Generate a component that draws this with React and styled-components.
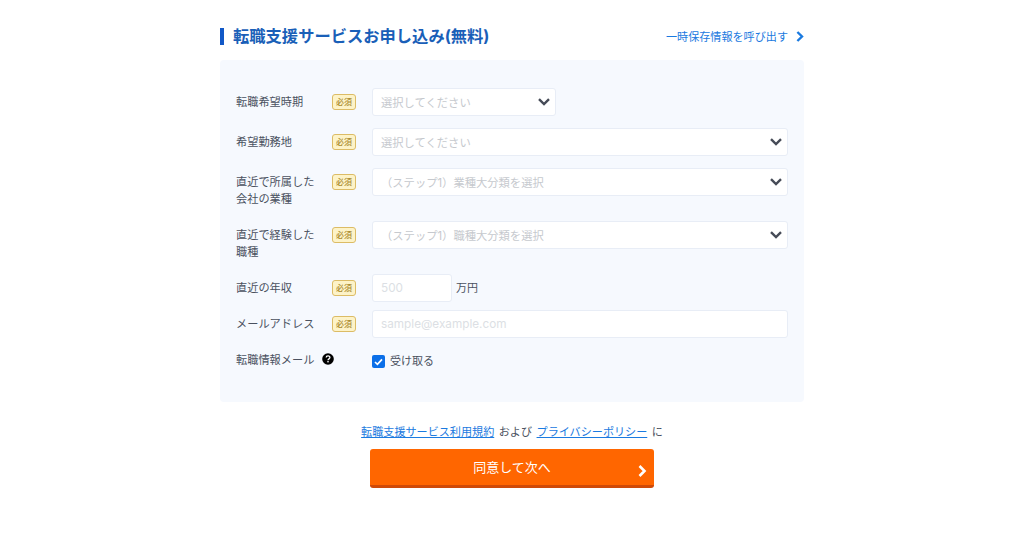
import React from 'react';
import styled, { createGlobalStyle } from 'styled-components';

const Global = createGlobalStyle`
  html, body { margin: 0; background: #fff; }
  body { font-family: "Inter", "Noto Sans CJK JP", sans-serif; color: #4a5160; }
`;

const Page = styled.main`
  width: 584px;
  margin: 0 auto;
  padding-top: 24px;
  height: 550px;
  box-sizing: border-box;
`;

const Header = styled.header`
  display: flex;
  justify-content: space-between;
  align-items: center;
  height: 24px;
  margin-bottom: 12px;
`;

const Title = styled.h1`
  margin: 0;
  font-size: 16.3px;
  line-height: 24px;
  font-weight: 700;
  color: #1a5fb8;
  border-left: 4px solid #1158c7;
  padding-left: 9px;
  height: 17px;
  display: flex;
  align-items: center;
`;

const RestoreLink = styled.a`
  display: flex;
  align-items: center;
  gap: 8px;
  font-size: 11.1px;
  color: #1a7ae0;
`;

const Panel = styled.section`
  background: #f6f9fe;
  border-radius: 4px;
  padding: 28px 16px 0;
  height: 342px;
  box-sizing: border-box;
  display: flex;
  flex-direction: column;
  gap: 12px;
`;

const Row = styled.div`
  display: flex;
  align-items: flex-start;
  margin-top: ${p => (p.$tight ? -4 : 0)}px;
`;

const Label = styled.label`
  width: 96px;
  font-size: 11.2px;
  line-height: 17px;
  padding: 6px 0 1px;
  flex: none;
`;

const Badge = styled.span`
  width: 24px;
  height: 16px;
  box-sizing: border-box;
  margin-top: 6px;
  margin-right: 16px;
  flex: none;
  display: flex;
  align-items: center;
  justify-content: center;
  background: #fdf3c8;
  border: 1px solid #dcbc66;
  border-radius: 3px;
  color: #a98a2c;
  font-size: 8px;
  font-weight: 500;
  line-height: 1;
`;

const Field = styled.div`
  width: ${p => p.$w}px;
  height: 28px;
  box-sizing: border-box;
  background: #fff;
  border: 1px solid #e8edf6;
  border-radius: 3px;
  padding: 0 5px 1px 8px;
  display: flex;
  align-items: center;
  justify-content: space-between;
  font-size: ${p => (p.$latin ? 11.75 : 11.3)}px;
  color: ${p => (p.$latin ? '#dcdfe4' : '#c6c9ce')};
`;

const Unit = styled.span`
  font-size: 11px;
  line-height: 28px;
  margin-left: 4px;
`;

const HelpSlot = styled.span`
  margin-left: -10px;
  padding-top: 7px;
  width: 50px;
  flex: none;
  display: flex;
`;

const CheckRow = styled.label`
  display: flex;
  align-items: center;
  gap: 5px;
  font-size: 11px;
  line-height: 17px;
  padding-top: 7px;
`;

const CheckBox = styled.span`
  width: 13px;
  height: 13px;
  border-radius: 2px;
  background: #0b6fe8;
  display: flex;
  align-items: center;
  justify-content: center;
`;

const Agree = styled.p`
  margin: 22px 0 0;
  font-size: 11.1px;
  line-height: 17px;
  display: flex;
  justify-content: center;
  gap: 4.5px;
`;

const TermsLink = styled.a`
  color: #1a7ae0;
  text-decoration: underline;
`;

const Submit = styled.button`
  display: block;
  position: relative;
  width: 284px;
  height: 39px;
  margin: 8px auto 0;
  padding: 0 0 1px;
  border: none;
  border-bottom: 3px solid #cf4a08;
  border-radius: 3px;
  background: #ff6600;
  color: #fff;
  font-family: inherit;
  font-size: 13px;
  font-weight: 400;
`;

const SubmitArrow = styled.svg`
  position: absolute;
  right: 7px;
  top: 16px;
`;

const Chevron = () => (
  <svg width="12" height="8" viewBox="0 0 12 8" fill="none">
    <path d="M1 1.2 6 6 11 1.2" stroke="#464b57" strokeWidth="2.4" />
  </svg>
);

const Help = () => (
  <svg width="12" height="12" viewBox="0 0 12 12">
    <circle cx="6" cy="6" r="5.8" fill="#000" />
    <path d="M4.2 4.6c0-2.2 3.7-2.2 3.7-.1 0 1.4-1.9 1.3-1.9 2.7" stroke="#fff" strokeWidth="1.3" fill="none" />
    <rect x="5.3" y="8" width="1.4" height="1.4" fill="#fff" />
  </svg>
);

const rows = [
  { label: '転職希望時期', text: '選択してください', w: 184 },
  { label: '希望勤務地', text: '選択してください', w: 416 },
  { label: <>直近で所属した<br />会社の業種</>, text: '（ステップ1）業種大分類を選択', w: 416 },
  { label: <>直近で経験した<br />職種</>, text: '（ステップ1）職種大分類を選択', w: 416 },
];

const App = () => (
  <Page>
    <Global />
    <Header>
      <Title>転職支援サービスお申し込み(無料)</Title>
      <RestoreLink>
        一時保存情報を呼び出す
        <svg width="8" height="11" viewBox="0 0 8 11" fill="none">
          <path d="M1.4 1 6 5.5 1.4 10" stroke="#1a7ae0" strokeWidth="2.4" />
        </svg>
      </RestoreLink>
    </Header>
    <Panel>
      {rows.map((r, i) => (
        <Row key={i}>
          <Label>{r.label}</Label>
          <Badge>必須</Badge>
          <Field $w={r.w}>{r.text}<Chevron /></Field>
        </Row>
      ))}
      <Row>
        <Label>直近の年収</Label>
        <Badge>必須</Badge>
        <Field $w={80} $latin>500</Field>
        <Unit>万円</Unit>
      </Row>
      <Row $tight>
        <Label>メールアドレス</Label>
        <Badge>必須</Badge>
        <Field $w={416} $latin>sample@example.com</Field>
      </Row>
      <Row $tight>
        <Label>転職情報メール</Label>
        <HelpSlot><Help /></HelpSlot>
        <CheckRow>
          <CheckBox>
            <svg width="9" height="8" viewBox="0 0 9 8" fill="none">
              <path d="M1 4 3.4 6.3 8 1.3" stroke="#fff" strokeWidth="1.7" />
            </svg>
          </CheckBox>
          受け取る
        </CheckRow>
      </Row>
    </Panel>
    <Agree>
      <TermsLink>転職支援サービス利用規約</TermsLink>
      <span>および</span>
      <TermsLink>プライバシーポリシー</TermsLink>
      <span>に</span>
    </Agree>
    <Submit>
      同意して次へ
      <SubmitArrow width="9" height="12" viewBox="0 0 9 12" fill="none">
        <path d="M1.5 1 6.5 6 1.5 11" stroke="#fff" strokeWidth="2.6" />
      </SubmitArrow>
    </Submit>
  </Page>
);

export default App;
